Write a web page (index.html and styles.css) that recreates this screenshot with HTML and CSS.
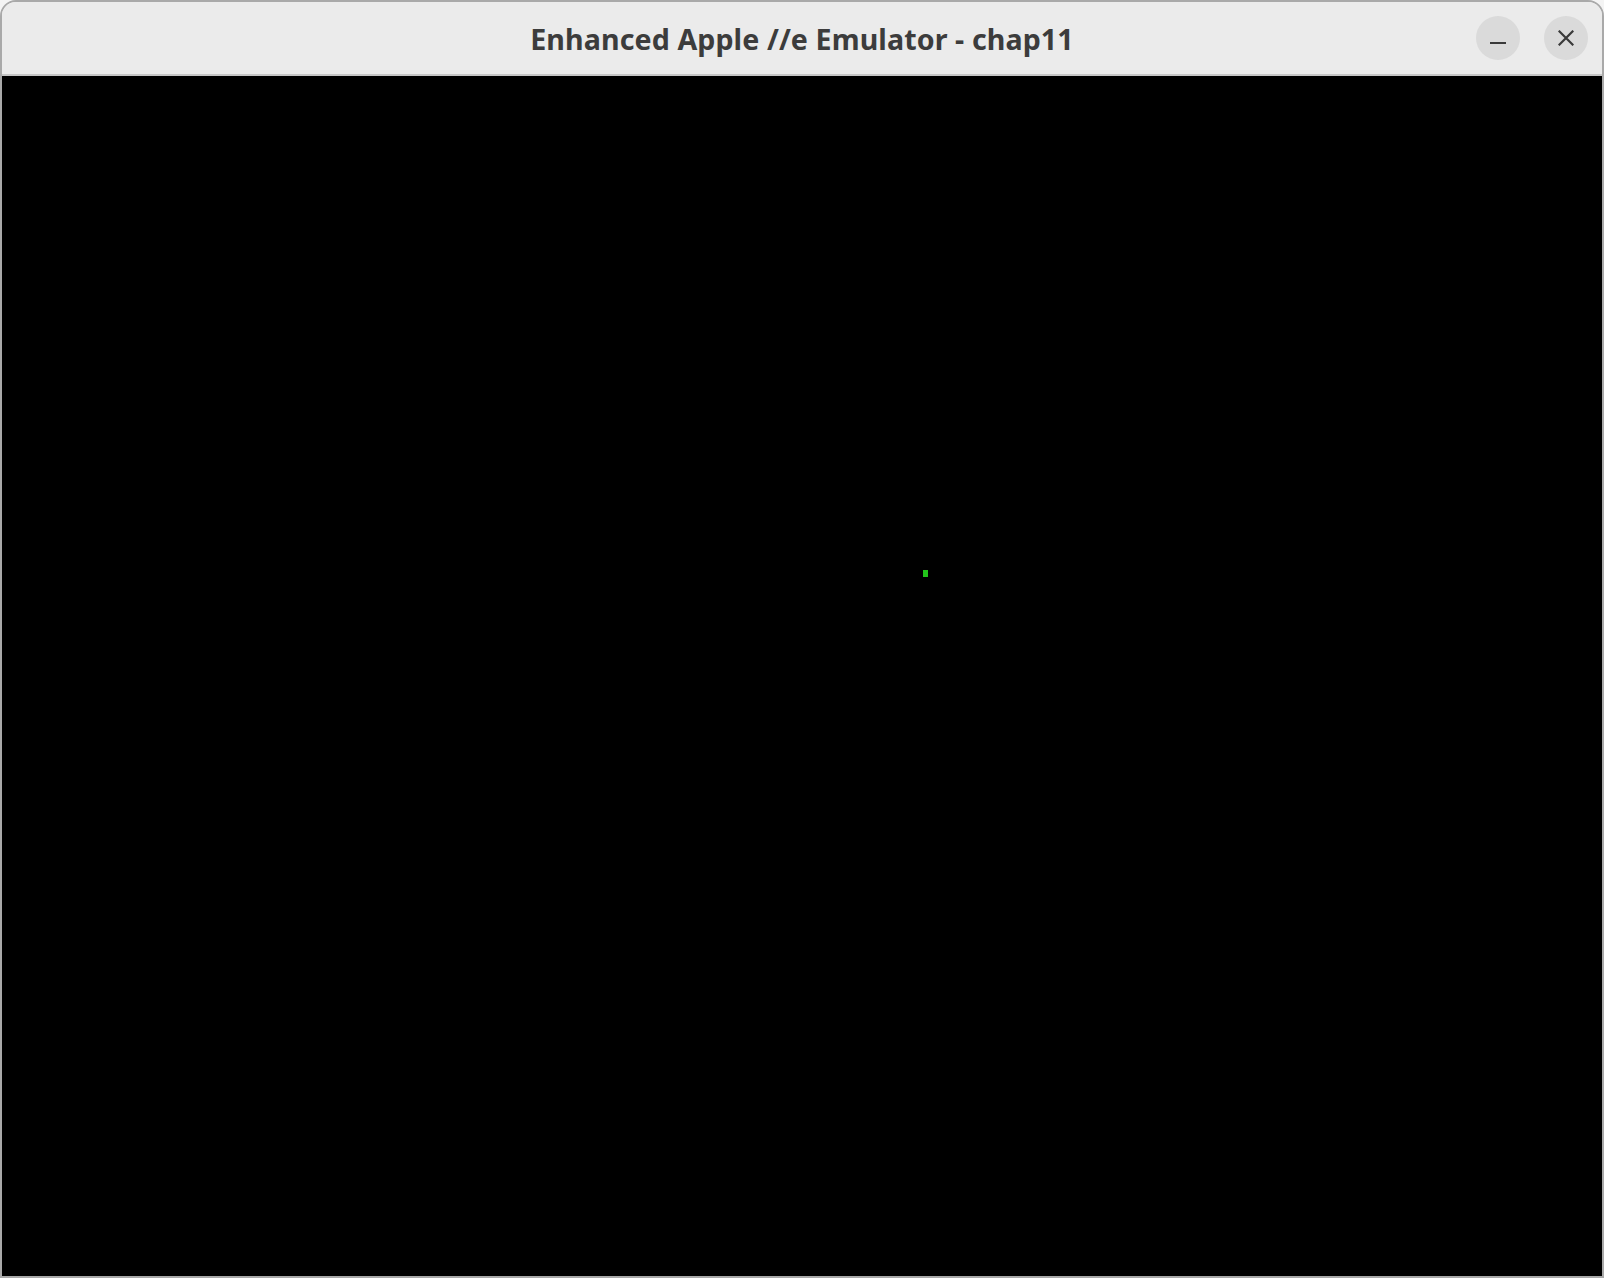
FILE: index.html
```html
<!DOCTYPE html>
<html>
<head>
<meta charset="utf-8">
<title>Enhanced Apple //e Emulator - chap11</title>
<link rel="stylesheet" href="styles.css">
</head>
<body>
<div class="window">
  <header class="titlebar">
    <div class="spacer"></div>
    <div class="title">Enhanced Apple //e Emulator - chap11</div>
    <div class="controls">
      <button class="btn" aria-label="Minimize">
        <svg width="16" height="16" viewBox="0 0 16 16"><rect x="0" y="12" width="16" height="2" fill="#3a3a3a"/></svg>
      </button>
      <button class="btn" aria-label="Close">
        <svg width="16" height="16" viewBox="0 0 16 16"><path d="M1.5 1.5 L14.5 14.5 M14.5 1.5 L1.5 14.5" stroke="#3a3a3a" stroke-width="2.2" stroke-linecap="square" fill="none"/></svg>
      </button>
    </div>
  </header>
  <main class="screen">
    <div class="cursor"></div>
  </main>
</div>
</body>
</html>
```
FILE: styles.css
```css
html, body {
  margin: 0;
  padding: 0;
  background: #f4f4f4;
}
.window {
  box-sizing: border-box;
  width: 1604px;
  height: 1278px;
  border: 2px solid #a9a9a9;
  border-radius: 16px 16px 0 0;
  overflow: hidden;
  display: flex;
  flex-direction: column;
}
.titlebar {
  height: 72px;
  flex: 0 0 72px;
  background: #ebebeb;
  border-bottom: 2px solid #c6c6c6;
  display: grid;
  grid-template-columns: 1fr auto 1fr;
  align-items: center;
}
.title {
  font-family: "Noto Sans", "Open Sans", sans-serif;
  font-weight: 700;
  font-size: 28.6px;
  color: #3c3c3c;
  letter-spacing: 0.1px;
  padding-top: 0;
}
.controls {
  display: flex;
  justify-content: flex-end;
  gap: 24px;
  padding-right: 14px;
}
.btn {
  width: 44px;
  height: 44px;
  border-radius: 50%;
  border: none;
  background: #dadada;
  padding: 0;
  display: flex;
  align-items: center;
  justify-content: center;
}
.screen {
  flex: 1;
  background: #000;
  position: relative;
}
.cursor {
  position: absolute;
  left: 921px;
  top: 494px;
  width: 5px;
  height: 7px;
  background: #22c41a;
}
```
